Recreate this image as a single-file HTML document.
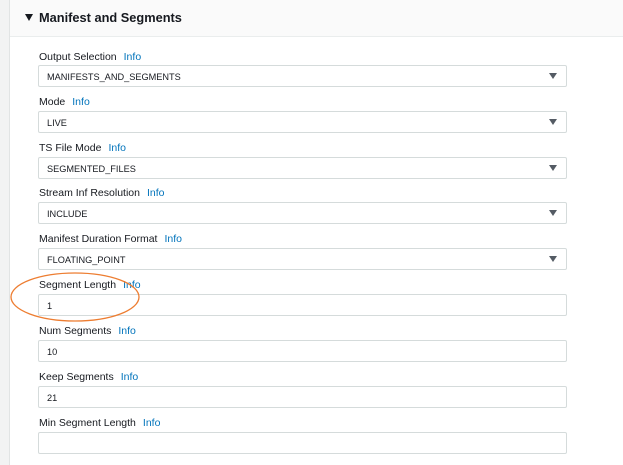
<!DOCTYPE html>
<html><head><meta charset="utf-8"><style>
body{margin:0;width:623px;height:465px;background:#fff;font-family:"Liberation Sans",sans-serif;position:relative;overflow:hidden}
.strip{position:absolute;left:0;top:0;width:9px;height:465px;background:#f2f3f3;border-right:1px solid #e1e4e4}
.hdr{position:absolute;left:10px;top:0;width:613px;height:36px;background:#fafafa;border-bottom:1px solid #eaeded}
.hdr span{position:absolute;left:29px;top:10px;font-size:12.8px;font-weight:bold;color:#16191f}
.tri{position:absolute;left:15px;top:14px;width:0;height:0;border-left:4px solid transparent;border-right:4px solid transparent;border-top:7px solid #16191f}
.lbl{position:absolute;left:39px;font-size:10.5px;color:#16191f}
.lbl b{font-weight:normal;color:#0073bb;margin-left:7px}
.in{position:absolute;left:38px;width:527px;height:20px;border:1px solid #d5dbdb;border-radius:2px;box-sizing:content-box;font-size:9.2px;color:#16191f;line-height:22px;text-indent:8px}
.in i{position:absolute;right:9px;top:7px;width:0;height:0;border-left:4px solid transparent;border-right:4px solid transparent;border-top:6px solid #545b64}
</style></head><body>
<div class="strip"></div>
<div class="hdr"><div class="tri"></div><span>Manifest and Segments</span></div>
<div class="lbl" style="top:51px">Output Selection<b>Info</b></div>
<div class="in" style="top:65px">MANIFESTS_AND_SEGMENTS<i></i></div>
<div class="lbl" style="top:96px">Mode<b>Info</b></div>
<div class="in" style="top:111px">LIVE<i></i></div>
<div class="lbl" style="top:142px">TS File Mode<b>Info</b></div>
<div class="in" style="top:157px">SEGMENTED_FILES<i></i></div>
<div class="lbl" style="top:187px">Stream Inf Resolution<b>Info</b></div>
<div class="in" style="top:202px">INCLUDE<i></i></div>
<div class="lbl" style="top:233px">Manifest Duration Format<b>Info</b></div>
<div class="in" style="top:248px">FLOATING_POINT<i></i></div>
<div class="lbl" style="top:279px">Segment Length<b>Info</b></div>
<div class="in" style="top:294px">1</div>
<div class="lbl" style="top:325px">Num Segments<b>Info</b></div>
<div class="in" style="top:340px">10</div>
<div class="lbl" style="top:371px">Keep Segments<b>Info</b></div>
<div class="in" style="top:386px">21</div>
<div class="lbl" style="top:417px">Min Segment Length<b>Info</b></div>
<div class="in" style="top:432px"></div>
<svg style="position:absolute;left:0;top:0" width="623" height="465"><ellipse cx="75" cy="297" rx="64" ry="24" fill="none" stroke="#ed7d31" stroke-width="1.3"/></svg>
</body></html>
